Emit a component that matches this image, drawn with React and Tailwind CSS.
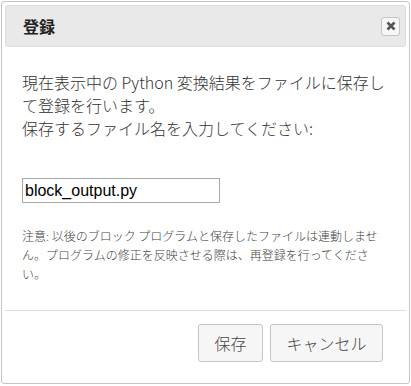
import React from 'react';

const jp = { fontFamily: '"Noto Sans CJK JP", "Noto Sans", sans-serif' };

const App = () => {
    return (
        <div className="w-[411px] h-[386px] bg-white p-px" style={jp}>
            {/* Dialog */}
            <div className="w-[409px] h-[383px] border border-[#c5c5c5] rounded-[3px] p-[3px] flex flex-col">
                {/* Title bar */}
                <div className="h-[42px] bg-[#e9e9e9] border border-[#dddddd] rounded-[3px] flex items-center justify-between pl-[17px] pr-[5px]">
                    <span className="text-[16px] font-bold text-[#222222] leading-none">登録</span>
                    <button className="w-[19px] h-[19px] border border-[#c5c5c5] bg-[#f6f6f6] rounded-[3px] flex items-center justify-center">
                        <svg width="10" height="10" viewBox="0 0 10 10">
                            <path d="M1.5 1.5 L8.5 8.5 M8.5 1.5 L1.5 8.5" stroke="#555555" strokeWidth="2.6" strokeLinecap="butt" />
                        </svg>
                    </button>
                </div>

                {/* Content */}
                <div className="flex-1 pl-[17px] pr-[4px] pt-[24px]">
                    <p className="text-[16px] leading-[23px] font-light text-[#333333] whitespace-nowrap">
                        現在表示中の Python 変換結果をファイルに保存し<br />
                        て登録を行います。<br />
                        保存するファイル名を入力してください:
                    </p>
                    <input
                        type="text"
                        defaultValue="block_output.py"
                        className="mt-[38px] block w-[198px] h-[25px] border border-[#a9a9a9] px-[2px] text-[16px] text-black outline-none"
                        style={{ fontFamily: '"Liberation Sans", Arial, sans-serif' }}
                    />
                    <p className="mt-[23px] text-[12px] leading-[19px] font-light text-[#444444] whitespace-nowrap">
                        注意: 以後のブロック プログラムと保存したファイルは連動しませ<br />
                        ん。プログラムの修正を反映させる際は、再登録を行ってくださ<br />
                        い。
                    </p>
                </div>

                {/* Button pane */}
                <div className="border-t border-[#dddddd] h-[70px] flex items-start justify-end gap-[7px] pt-[13px] pr-[23px]">
                    <button className="h-[38px] w-[65px] border border-[#c5c5c5] bg-[#f6f6f6] rounded-[3px] text-[16px] font-light text-[#454545]">
                        保存
                    </button>
                    <button className="h-[38px] w-[113px] border border-[#c5c5c5] bg-[#f6f6f6] rounded-[3px] text-[16px] font-light text-[#454545]">
                        キャンセル
                    </button>
                </div>
            </div>
        </div>
    );
};

export default App;
